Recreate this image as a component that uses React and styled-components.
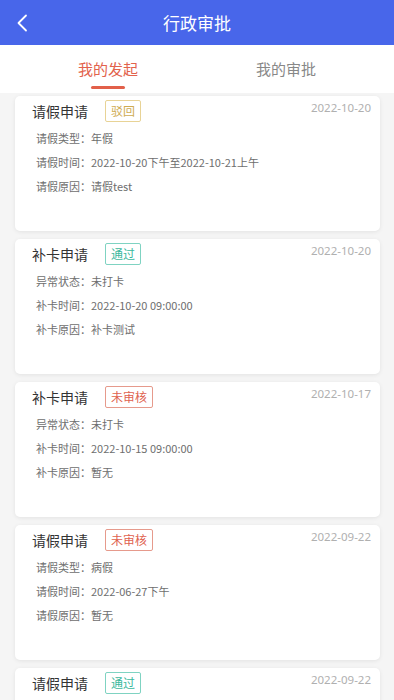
import React, { useState } from "react"
import styled, { createGlobalStyle } from "styled-components"

const GlobalStyle = createGlobalStyle`
  body {
    margin: 0;
    background: #f5f5f5;
    font-family: "Noto Sans CJK SC", "Noto Sans", sans-serif;
  }
`

const Page = styled.div`
  width: 394px;
  height: 700px;
  overflow: hidden;
  background: #f5f5f5;
`

const NavBar = styled.header`
  height: 45px;
  background: #4866ea;
  display: flex;
  align-items: center;
  justify-content: center;
  position: relative;
  color: #fff;
  font-size: 17px;
`

const BackButton = styled.button`
  position: absolute;
  left: 10px;
  top: 10px;
  width: 24px;
  height: 26px;
  padding: 0;
  border: none;
  background: transparent;
  display: flex;
  align-items: center;
  justify-content: center;
`

const Tabs = styled.nav`
  height: 48px;
  background: #fff;
  display: flex;
  padding: 0 19px;
`

const Tab = styled.div`
  flex: 1;
  position: relative;
  display: flex;
  align-items: center;
  justify-content: center;
  font-size: 15px;
  color: ${({ active }) => (active ? "#e2624c" : "#888")};
  padding-bottom: 2px;

  &::after {
    content: "";
    display: ${({ active }) => (active ? "block" : "none")};
    position: absolute;
    bottom: 4px;
    left: 50%;
    width: 34px;
    height: 3px;
    margin-left: -17px;
    border-radius: 2px;
    background: #e2604a;
  }
`

const List = styled.div`
  padding: 3px 14px 0 15px;
  display: flex;
  flex-direction: column;
  gap: 8px;
`

const Card = styled.div`
  height: 135px;
  box-sizing: border-box;
  background: #fff;
  border-radius: 5px;
  box-shadow: 0 1px 4px rgba(0, 0, 0, 0.08);
  padding: 4px 9px 0 17px;
`

const CardHead = styled.div`
  display: flex;
  align-items: center;
  height: 22px;
`

const Title = styled.div`
  font-size: 14px;
  color: #333;
  width: 73px;
`

const badgeColors = {
  reject: { border: "#e8d396", text: "#cfab52" },
  pass: { border: "#7fd3c2", text: "#3bb89d" },
  pending: { border: "#e69a8c", text: "#e0624f" },
}

const Badge = styled.span`
  height: 22px;
  box-sizing: border-box;
  padding: 0 5px;
  border: 1px solid ${({ kind }) => badgeColors[kind].border};
  color: ${({ kind }) => badgeColors[kind].text};
  border-radius: 2px;
  font-size: 12px;
  line-height: 20px;
`

const DateText = styled.div`
  margin-left: auto;
  align-self: flex-start;
  font-size: 11.5px;
  color: #b0b0b0;
  font-family: "Noto Sans", sans-serif;
`

const Lines = styled.div`
  padding-left: 4px;
  margin-top: 8px;
  display: flex;
  flex-direction: column;
  gap: 7px;
`

const Line = styled.div`
  font-size: 11px;
  line-height: 17px;
  color: #6e6e6e;
`

const records = [
  {
    title: "请假申请",
    status: "reject",
    label: "驳回",
    date: "2022-10-20",
    lines: ["请假类型：年假", "请假时间：2022-10-20下午至2022-10-21上午", "请假原因：请假test"],
  },
  {
    title: "补卡申请",
    status: "pass",
    label: "通过",
    date: "2022-10-20",
    lines: ["异常状态：未打卡", "补卡时间：2022-10-20 09:00:00", "补卡原因：补卡测试"],
  },
  {
    title: "补卡申请",
    status: "pending",
    label: "未审核",
    date: "2022-10-17",
    lines: ["异常状态：未打卡", "补卡时间：2022-10-15 09:00:00", "补卡原因：暂无"],
  },
  {
    title: "请假申请",
    status: "pending",
    label: "未审核",
    date: "2022-09-22",
    lines: ["请假类型：病假", "请假时间：2022-06-27下午", "请假原因：暂无"],
  },
  {
    title: "请假申请",
    status: "pass",
    label: "通过",
    date: "2022-09-22",
    lines: ["请假类型：事假", "请假时间：2022-09-22上午", "请假原因：暂无"],
  },
]

const App = () => {
  const [tab, setTab] = useState(0)
  return (
    <Page>
      <GlobalStyle />
      <NavBar>
        <BackButton>
          <svg width="12" height="18" viewBox="0 0 12 18">
            <path d="M10 1.5 L2.5 9 L10 16.5" fill="none" stroke="#fff" strokeWidth="1.8" strokeLinecap="round" strokeLinejoin="round" />
          </svg>
        </BackButton>
        行政审批
      </NavBar>
      <Tabs>
        <Tab active={tab === 0} onClick={() => setTab(0)}>我的发起</Tab>
        <Tab active={tab === 1} onClick={() => setTab(1)}>我的审批</Tab>
      </Tabs>
      <List>
        {records.map((r, i) => (
          <Card key={i}>
            <CardHead>
              <Title>{r.title}</Title>
              <Badge kind={r.status}>{r.label}</Badge>
              <DateText>{r.date}</DateText>
            </CardHead>
            <Lines>
              {r.lines.map((l) => (
                <Line key={l}>{l}</Line>
              ))}
            </Lines>
          </Card>
        ))}
      </List>
    </Page>
  )
}

export default App
